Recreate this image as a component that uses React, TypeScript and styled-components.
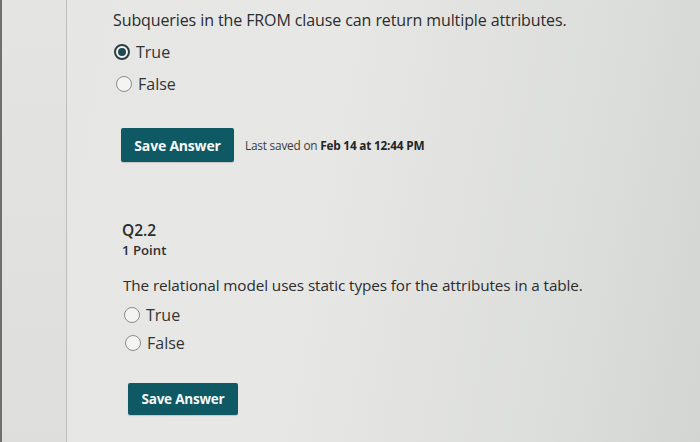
import React from "react";
import styled, { createGlobalStyle } from "styled-components";

const Global = createGlobalStyle`
  html, body { margin: 0; padding: 0; }
  body {
    width: 700px;
    height: 442px;
    overflow: hidden;
    font-family: "Open Sans", "Noto Sans", sans-serif;
    color: #2e2f30;
  }
`;

const Page = styled.div`
  display: flex;
  width: 700px;
  height: 442px;
  background: linear-gradient(100deg, #e6e6e4 0%, #e7e7e5 45%, #dcdedc 80%, #d3d5d3 100%);
`;

const Edge = styled.div`
  width: 2px;
  background: #6f6f6f;
`;

const Gutter = styled.div`
  width: 64px;
  border-right: 1px solid #bdbebd;
  background: linear-gradient(180deg, #e4e4e2 0%, #dedfdd 100%);
`;

const Content = styled.main`
  flex: 1;
  display: flex;
  flex-direction: column;
  padding: 9px 0 0 46px;
`;

const Prompt = styled.p`
  margin: 0;
  font-size: 16px;
  line-height: 22px;
  color: #2b2c2d;
  letter-spacing: -0.1px;
`;

const Options = styled.div<{ $gap: number; $top: number; $indent: number }>`
  display: flex;
  flex-direction: column;
  gap: ${(p) => p.$gap}px;
  margin-top: ${(p) => p.$top}px;
  padding-left: ${(p) => p.$indent}px;
`;

const Option = styled.label<{ $shift: number }>`
  display: flex;
  align-items: center;
  gap: 6px;
  font-size: 16px;
  line-height: 22px;
  color: #333435;
  padding-left: ${(p) => p.$shift}px;
`;

const Radio = styled.span<{ $checked?: boolean }>`
  box-sizing: border-box;
  width: 16px;
  height: 16px;
  border-radius: 50%;
  border: ${(p) => (p.$checked ? "2px solid #2d3f44" : "1px solid #8a8c8d")};
  background: #f4f4f3;
  display: flex;
  align-items: center;
  justify-content: center;
  &::after {
    content: "";
    display: ${(p) => (p.$checked ? "block" : "none")};
    width: 8px;
    height: 8px;
    border-radius: 50%;
    background: #1f4a55;
  }
`;

const SaveRow = styled.div<{ $top: number; $indent: number }>`
  display: flex;
  align-items: center;
  gap: 11px;
  margin-top: ${(p) => p.$top}px;
  padding-left: ${(p) => p.$indent}px;
`;

const SaveButton = styled.button<{ $w: number; $h: number; $size: number }>`
  width: ${(p) => p.$w}px;
  height: ${(p) => p.$h}px;
  border: none;
  border-radius: 2px;
  background: #0f5965;
  color: #f6f8f8;
  font-family: "Open Sans", "Noto Sans", sans-serif;
  font-weight: 700;
  font-size: ${(p) => p.$size}px;
  letter-spacing: -0.2px;
  padding: 0;
  box-shadow: 0 1px 1px rgba(0, 0, 0, 0.15);
`;

const SavedNote = styled.span`
  font-size: 11.8px;
  color: #3a3b3c;
  letter-spacing: -0.2px;
  b { font-weight: 700; color: #242526; }
`;

const Question = styled.section`
  display: flex;
  flex-direction: column;
  margin-top: 58px;
  padding-left: 9px;
`;

const QTitle = styled.h2`
  margin: 0;
  font-size: 15.5px;
  line-height: 20px;
  font-weight: 600;
  color: #2a2b2c;
`;

const QPoints = styled.div`
  margin-top: 2px;
  font-size: 13.2px;
  line-height: 17px;
  font-weight: 600;
  color: #2f3031;
`;

const Prompt2 = styled(Prompt)`
  margin-top: 15px;
  font-size: 15.3px;
  padding-left: 1px;
`;

export default function App() {
  return (
    <>
      <Global />
      <Page>
        <Edge />
        <Gutter />
        <Content>
          <Prompt>Subqueries in the FROM clause can return multiple attributes.</Prompt>
          <Options $gap={10} $top={10} $indent={1}>
            <Option $shift={0}>
              <Radio $checked />
              True
            </Option>
            <Option $shift={2}>
              <Radio />
              False
            </Option>
          </Options>
          <SaveRow $top={33} $indent={8}>
            <SaveButton $w={113} $h={34} $size={14}>Save Answer</SaveButton>
            <SavedNote>
              Last saved on <b>Feb 14 at 12:44 PM</b>
            </SavedNote>
          </SaveRow>
          <Question>
            <QTitle>Q2.2</QTitle>
            <QPoints>1 Point</QPoints>
            <Prompt2>The relational model uses static types for the attributes in a table.</Prompt2>
            <Options $gap={6} $top={8} $indent={2}>
              <Option $shift={0}>
                <Radio />
                True
              </Option>
              <Option $shift={1}>
                <Radio />
                False
              </Option>
            </Options>
            <SaveRow $top={29} $indent={6}>
              <SaveButton $w={110} $h={32} $size={13.5}>Save Answer</SaveButton>
            </SaveRow>
          </Question>
        </Content>
      </Page>
    </>
  );
}
